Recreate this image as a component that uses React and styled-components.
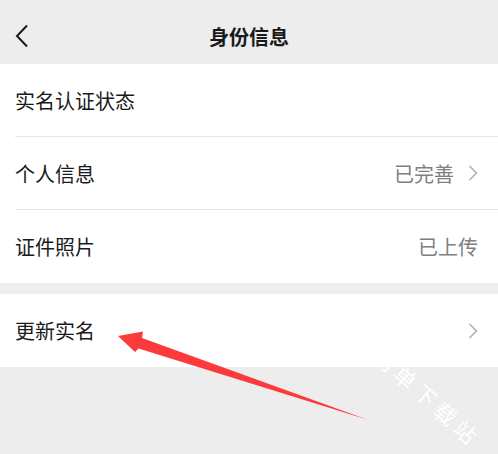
import styled, { createGlobalStyle } from "styled-components";

const GlobalStyle = createGlobalStyle`
  html, body {
    margin: 0;
    padding: 0;
    background: #ededed;
  }
  body {
    font-family: "Noto Sans CJK SC", "Noto Sans", sans-serif;
  }
`;

const rows = [
  { title: "实名认证状态" },
  { title: "个人信息", value: "已完善", arrow: true },
  { title: "证件照片", value: "已上传" },
];

const App = () => {
  return (
    <>
      <GlobalStyle />
      <Page>
        <Header>
          <BackBtn>
            <svg width="14" height="24" viewBox="0 0 14 24">
              <polyline
                points="12,1.5 2,12 12,22.5"
                fill="none"
                stroke="#1a1a1a"
                strokeWidth="2"
              />
            </svg>
          </BackBtn>
          <Title>身份信息</Title>
        </Header>

        <Group>
          {rows.map((row, i) => (
            <Row key={i} divider={i < rows.length - 1}>
              <Label>{row.title}</Label>
              <Right>
                {row.value && <Value>{row.value}</Value>}
                {row.arrow && <Chevron />}
              </Right>
            </Row>
          ))}
        </Group>

        <Group>
          <Row>
            <Label>更新实名</Label>
            <Right>
              <Chevron />
            </Right>
          </Row>
        </Group>

        {/* red annotation arrow over the page */}
        <Overlay width="498" height="454" viewBox="0 0 498 454">
          <polygon
            points="118,336 143,331.5 142,338 367,419.5 138.5,348.5 135,352"
            fill="#fd3a3a"
          />
        </Overlay>
        <Watermark>简单下载站</Watermark>
      </Page>
    </>
  );
};

const Chevron = () => (
  <svg width="10" height="16" viewBox="0 0 10 16">
    <polyline
      points="1.5,1 8.5,8 1.5,15"
      fill="none"
      stroke="#b2b2b2"
      strokeWidth="1.6"
    />
  </svg>
);

// Styled Components
const Page = styled.div`
  position: relative;
  width: 498px;
  height: 454px;
  overflow: hidden;
  background: #ededed;
`;

const Header = styled.div`
  height: 64px;
  display: flex;
  align-items: center;
  justify-content: center;
  position: relative;
`;

const BackBtn = styled.div`
  position: absolute;
  left: 15px;
  top: 24px;
  width: 14px;
  height: 24px;
  display: flex;
`;

const Title = styled.div`
  font-size: 20px;
  font-weight: 700;
  color: #1a1a1a;
  margin-top: 8px;
`;

const Group = styled.div`
  background: #fff;
  padding-left: 15px;
  margin-bottom: 11px;
`;

const Row = styled.div`
  height: 73px;
  display: flex;
  align-items: center;
  justify-content: space-between;
  padding-right: 20px;
  box-sizing: border-box;
  border-bottom: ${(props) => (props.divider ? "1px solid #e6e6e6" : "none")};
`;

const Label = styled.div`
  font-size: 20px;
  color: #1a1a1a;
`;

const Right = styled.div`
  display: flex;
  align-items: center;
  gap: 14px;
`;

const Value = styled.div`
  font-size: 20px;
  color: #808080;
`;

const Overlay = styled.svg`
  position: absolute;
  left: 0;
  top: 0;
  pointer-events: none;
`;

const Watermark = styled.div`
  position: absolute;
  left: 378px;
  top: 340px;
  font-size: 22px;
  line-height: 22px;
  color: #fff;
  letter-spacing: 5px;
  transform: rotate(42deg);
  transform-origin: left center;
  white-space: nowrap;
  pointer-events: none;
`;

export default App;
